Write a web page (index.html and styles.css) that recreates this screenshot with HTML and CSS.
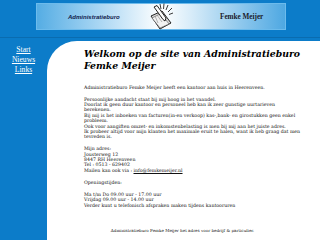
FILE: index.html
```html
<!DOCTYPE html>
<html>
<head>
<meta charset="utf-8">
<link rel="stylesheet" href="styles.css">
</head>
<body>
<div class="top">
  <div class="banner">
    <span class="b-left">Administratieburo</span>
    <svg class="logo" width="26" height="27" viewBox="0 0 26 27">
      <g stroke="#222" stroke-width="0.9" fill="none">
        <path d="M13 6 L12 1 M15.5 6 L16 0.5 M18 7 L20 2 M20 9 L24 5 M21 11.5 L25 10 M10.5 7 L8 3"/>
      </g>
      <path d="M3 13 L14 8 L23 20 L12 26 Z" fill="#d8d8d8" stroke="#222" stroke-width="1"/>
      <path d="M4 15 L13 10.5 L21 21 L12 25 Z" fill="#f2f2f2" stroke="#555" stroke-width="0.6"/>
      <path d="M6 4 L9 2.5 L18 15 L17 18 L15 16.5 Z" fill="#fafafa" stroke="#222" stroke-width="1"/>
      <path d="M7 13 L10 20 M9 12 L14 19" stroke="#888" stroke-width="0.6"/>
    </svg>
    <span class="b-right">Femke Meijer</span>
  </div>
</div>
<div class="row">
  <nav class="nav">
    <a href="#">Start</a>
    <a href="#">Nieuws</a>
    <a href="#">Links</a>
  </nav>
  <main class="main">
    <h1 class="title">Welkom op de site van Administratieburo<br>Femke Meijer</h1>
    <p class="p first">Administratieburo Femke Meijer heeft een kantoor aan huis in Heerenveen.</p>
    <p class="p">Persoonlijke aandacht staat bij mij hoog in het vaandel.<br>Doorlat ik geen duur kantoor en personeel heb kan ik zeer gunstige uurtarieven<br>berekenen.<br>Bij mij is het inboeken van facturen(in-en verkoop) kas-,bank- en girostukken geen enkel<br>probleem.<br>Ook voor aangiften omzet- en inkomstenbelasting is men bij mij aan het juiste adres.<br>Ik probeer altijd voor mijn klanten het maximale eruit te halen, want ik heb graag dat men<br>tevreden is.</p>
    <p class="p">Mijn adres:<br>Jousterweg 12<br>8447 RH Heerenveen<br>Tel : 0513 - 629402<br>Mailen kan ook via : <a href="#">info@femkemeijer.nl</a></p>
    <p class="p">Openingstijden:</p>
    <p class="p">Ma t/m Do 09.00 uur - 17.00 uur<br>Vrijdag 09.00 uur - 14.00 uur<br>Verder kunt u telefonisch afspraken maken tijdens kantooruren</p>
    <p class="foot">Administratieburo Femke Meijer het adres voor bedrijf &amp; particulier.</p>
  </main>
</div>
</body>
</html>
```
FILE: styles.css
```css
html, body {
  margin: 0;
  padding: 0;
}
body {
  background: #0c7cc9;
  width: 320px;
  height: 240px;
  overflow: hidden;
  font-family: "DejaVu Serif", serif;
}
.top {
  display: flex;
  justify-content: center;
  padding: 3px 0 0 0;
  height: 38px;
  box-sizing: border-box;
  border-bottom: 1px solid #0a6cb0;
}
.banner {
  width: 250px;
  height: 27px;
  margin-left: 2px;
  box-sizing: border-box;
  border: 1px solid #6cbbec;
  background: linear-gradient(to right, #55ade4 0%, #a9d6f3 25%, #ffffff 50%, #d8ecf9 62%, #4ea8e2 100%);
  display: flex;
  align-items: center;
}
.b-left {
  font-family: "Liberation Sans", Arial, sans-serif;
  font-weight: bold;
  font-style: italic;
  font-size: 6px;
  color: #10204a;
  margin-left: 31px;
  width: 80px;
}
.logo {
  display: block;
}
.b-right {
  font-family: "Liberation Serif", "Times New Roman", serif;
  font-weight: bold;
  font-size: 7.2px;
  color: #1a1a2a;
  margin-left: 46px;
}
.row {
  display: flex;
  margin-top: 3px;
}
.nav {
  width: 47px;
  flex: none;
  display: flex;
  flex-direction: column;
  align-items: center;
  padding-top: 4px;
  font-family: "Liberation Serif", "Times New Roman", serif;
  font-size: 7.6px;
  line-height: 9.8px;
}
.nav a {
  color: #ffffff;
  text-decoration: underline;
}
.main {
  flex: 1;
  background: #ffffff;
  border-top-left-radius: 30px;
  min-height: 200px;
  padding: 7px 2px 0 37px;
  color: #111;
}
.title {
  margin: 0;
  font-size: 9.3px;
  line-height: 11.8px;
  font-weight: bold;
  font-style: italic;
  color: #000;
}
.p {
  margin: 6.5px 0 0 0;
  font-size: 4.7px;
  line-height: 5.4px;
  white-space: nowrap;
}
.p.first {
  margin-top: 13px;
}
.p a {
  color: #111;
  text-decoration: underline;
}
.foot {
  margin: 20px 0 0 -37px;
  text-align: center;
  font-size: 4.1px;
  line-height: 5px;
}
```
